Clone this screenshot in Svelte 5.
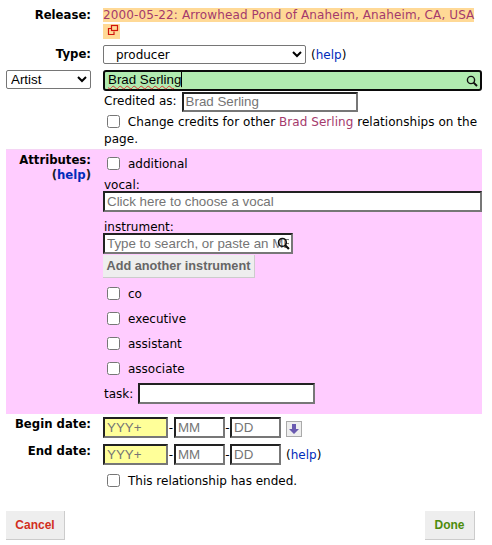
<script>
    let attrs = ['co', 'executive', 'assistant', 'associate'];
</script>

<style>
    :global(body) {
        margin: 0;
        background: #fff;
        font-family: "DejaVu Sans", Verdana, sans-serif;
        font-size: 12px;
        color: #000;
    }

    a {
        color: #002bba;
        text-decoration: none;
    }

    .page {
        width: 492px;
        height: 545px;
        padding: 8px 10px 0 6px;
        box-sizing: border-box;
    }

    .row {
        display: grid;
        grid-template-columns: 85px 1fr;
        column-gap: 12px;
    }

    .label {
        text-align: right;
        font-weight: bold;
        font-size: 11.7px;
        line-height: 15px;
    }

    .release {
        line-height: 15px;
        letter-spacing: 0.11px;
    }

    .release span {
        background: #ffd996;
        color: #a43a6c;
    }

    .ext {
        width: 17px;
        height: 15px;
        background: #ffd996;
        margin-top: 1px;
    }

    .ext svg {
        display: block;
        margin: 1px 0 0 4px;
    }

    .type {
        margin-top: 6px;
        align-items: center;
    }

    select {
        font-family: Arial, "Liberation Sans", sans-serif;
        font-size: 13.33px;
        box-sizing: border-box;
        background: #fff;
        border: 1px solid #767676;
        border-radius: 2px;
    }

    .type select {
        width: 203px;
        height: 19px;
        font-family: "DejaVu Sans", sans-serif;
        font-size: 12px;
        padding-left: 8px;
    }

    .help {
        margin-left: 5px;
    }

    .entity {
        margin-top: 6px;
    }

    .entity select {
        width: 85px;
        height: 19px;
        font-size: 13.33px;
    }

    .search {
        position: relative;
        height: 21px;
    }

    input[type="text"] {
        font-family: Arial, "Liberation Sans", sans-serif;
        font-size: 13.33px;
        box-sizing: border-box;
        border: 2px solid;
        border-color: #222 #777 #777 #222;
        padding: 1px 2px;
        height: 21px;
        background: #fff;
        margin: 0;
    }

    input::placeholder {
        color: #757575;
        opacity: 1;
    }

    .search input {
        width: 100%;
        background: #b1ebb0;
        border: 2px solid #0a0a0a;
        border-radius: 3px;
        color: #000;
        padding: 0 2px 2px 3px;
    }

    .squiggle {
        position: absolute;
        left: 5px;
        top: 2px;
        font-family: Arial, "Liberation Sans", sans-serif;
        font-size: 13.33px;
        line-height: 15px;
        color: transparent;
        text-decoration: underline wavy #d33;
        text-decoration-thickness: 1px;
        border-right: 1px solid #000;
    }

    .glass {
        position: absolute;
        right: 4px;
        top: 5px;
    }

    .credit {
        display: flex;
        align-items: center;
        gap: 5px;
        height: 20px;
        margin-top: 1px;
        padding-left: 1px;
    }

    .credit span {
        padding-bottom: 2px;
    }

    .credit input {
        width: 176px;
        height: 20px;
        padding: 0 2px 2px;
    }

    .check {
        display: flex;
        align-items: center;
        line-height: 16px;
    }

    input[type="checkbox"] {
        width: 13px;
        height: 13px;
        margin: 0 8px 2px 4px;
        flex: none;
    }

    .change {
        margin-top: 2px;
        line-height: 17px;
        padding-left: 1px;
        letter-spacing: 0.04px;
    }

    .change .box {
        width: 13px;
        height: 13px;
        margin: 0 4px 0 3px;
        vertical-align: -2px;
    }

    .change a {
        color: #a43a6c;
    }

    .attrs {
        background: #fcf;
        border-top: 1px solid #f5d5f5;
        margin-top: 1px;
        height: 265px;
        box-sizing: border-box;
        padding-top: 6px;
    }

    .attrs .label {
        margin-top: -3px;
    }

    .attrs .label a {
        display: block;
    }

    .attrs .label a b {
        color: #002bba;
    }

    .paren {
        color: #222;
    }

    .field {
        height: 14px;
        line-height: 16px;
        margin-top: 7px;
        padding-left: 1px;
    }

    .first {
        margin-top: 5px;
    }

    .vocal {
        width: 379px;
        display: block;
        margin-top: 1px;
    }

    .inst {
        position: relative;
        width: 190px;
    }

    .inst input {
        width: 190px;
        display: block;
    }

    .inst svg {
        position: absolute;
        right: 3px;
        top: 4px;
    }

    .add {
        display: block;
        margin-top: 1px;
        height: 23px;
        width: 152px;
        padding: 0;
        background: #eee;
        border: none;
        border-bottom: 1px solid #ccc;
        border-right: 1px solid #ccc;
        color: #666;
        font-family: Arial, "Liberation Sans", sans-serif;
        font-size: 12.7px;
        font-weight: bold;
        white-space: nowrap;
    }

    .list {
        margin-top: 8px;
        display: flex;
        flex-direction: column;
        gap: 9px;
    }

    .task {
        display: flex;
        align-items: center;
        gap: 5px;
        margin-top: 6px;
        padding-left: 1px;
    }

    .task input {
        width: 177px;
    }

    .date {
        display: flex;
        align-items: center;
        height: 21px;
    }

    .begin {
        margin-top: 3px;
    }

    .end {
        margin-top: 6px;
    }

    .date input {
        width: 51px;
    }

    .date input.year {
        width: 65px;
        background: #ffff99;
    }

    .dash {
        width: 6px;
        text-align: center;
    }

    .dash.narrow {
        width: 5px;
    }

    .arrow {
        margin: 2px 0 0 5px;
        width: 16px;
        height: 16px;
        box-sizing: border-box;
        border: 1px solid #aaa;
        background: #eee;
        display: flex;
        align-items: center;
        justify-content: center;
    }

    .ended {
        margin-top: 8px;
    }

    .buttons {
        display: flex;
        justify-content: space-between;
        margin-top: 22px;
        padding-right: 7px;
    }

    .buttons button {
        height: 29px;
        width: 59px;
        padding: 0;
        background: #eee;
        border: none;
        border-bottom: 1px solid #ccc;
        border-right: 1px solid #ccc;
        font-family: Arial, "Liberation Sans", sans-serif;
        font-size: 12px;
        font-weight: bold;
    }

    .cancel {
        color: #d22f1e;
    }

    .done {
        color: #4c8c0c;
        width: 50px !important;
    }
</style>

<div class="page">
    <div class="row">
        <div class="label">Release:</div>
        <div class="release">
            <span>2000-05-22: Arrowhead Pond of Anaheim, Anaheim, CA, USA</span>
            <div class="ext">
                <svg width="12" height="12" viewBox="0 0 12 12" fill="none" stroke="#d0140c" stroke-width="1.2">
                    <rect x="4.5" y="1.5" width="6" height="5" />
                    <path d="M4 4.5H1.5V10.5H7V7.5" />
                </svg>
            </div>
        </div>
    </div>

    <div class="row type">
        <div class="label">Type:</div>
        <div>
            <select><option>producer</option></select><span class="help">(<a href="#help">help</a>)</span>
        </div>
    </div>

    <div class="row entity">
        <select><option>Artist</option></select>
        <div>
            <div class="search">
                <input type="text" value="Brad Serling" />
                <span class="squiggle">Brad Serling</span>
                <svg class="glass" width="12" height="12" viewBox="0 0 12 12" fill="none" stroke="#111">
                    <circle cx="5" cy="5" r="3.6" stroke-width="1.4" />
                    <path d="M7.6 7.6L11 11" stroke-width="2" />
                </svg>
            </div>
            <div class="credit">
                <span>Credited as:</span>
                <input type="text" placeholder="Brad Serling" />
            </div>
            <div class="change">
                <input class="box" type="checkbox" />
                Change credits for other <a href="#artist">Brad Serling</a> relationships on the page.
            </div>
        </div>
    </div>

    <div class="row attrs">
        <div class="label">
            Attributes:
            <a href="#help"><span class="paren">(</span><b>help</b><span class="paren">)</span></a>
        </div>
        <div>
            <label class="check"><input type="checkbox" />additional</label>
            <div class="field first">vocal:</div>
            <input class="vocal" type="text" placeholder="Click here to choose a vocal" />
            <div class="field">instrument:</div>
            <div class="inst">
                <input type="text" placeholder="Type to search, or paste an MBID" />
                <svg width="13" height="13" viewBox="0 0 12 12" fill="none" stroke="#111">
                    <circle cx="5" cy="5" r="3.6" stroke-width="1.4" />
                    <path d="M7.6 7.6L11 11" stroke-width="2" />
                </svg>
            </div>
            <button class="add">Add another instrument</button>
            <div class="list">
                {#each attrs as a}
                    <label class="check"><input type="checkbox" />{a}</label>
                {/each}
            </div>
            <div class="task">
                <span>task:</span>
                <input type="text" />
            </div>
        </div>
    </div>

    <div class="row begin">
        <div class="label">Begin date:</div>
        <div class="date">
            <input class="year" type="text" placeholder="YYY+" /><span class="dash">-</span>
            <input type="text" placeholder="MM" /><span class="dash narrow">-</span>
            <input type="text" placeholder="DD" />
            <span class="arrow">
                <svg width="12" height="12" viewBox="0 0 12 12"><path d="M4 1H8V6H11L6 11L1 6H4Z" fill="#6a5ab0" /></svg>
            </span>
        </div>
    </div>

    <div class="row end">
        <div class="label">End date:</div>
        <div class="date">
            <input class="year" type="text" placeholder="YYY+" /><span class="dash">-</span>
            <input type="text" placeholder="MM" /><span class="dash narrow">-</span>
            <input type="text" placeholder="DD" />
            <span class="help">(<a href="#help">help</a>)</span>
        </div>
    </div>

    <div class="row ended">
        <div></div>
        <label class="check"><input type="checkbox" />This relationship has ended.</label>
    </div>

    <div class="buttons">
        <button class="cancel">Cancel</button>
        <button class="done">Done</button>
    </div>
</div>
